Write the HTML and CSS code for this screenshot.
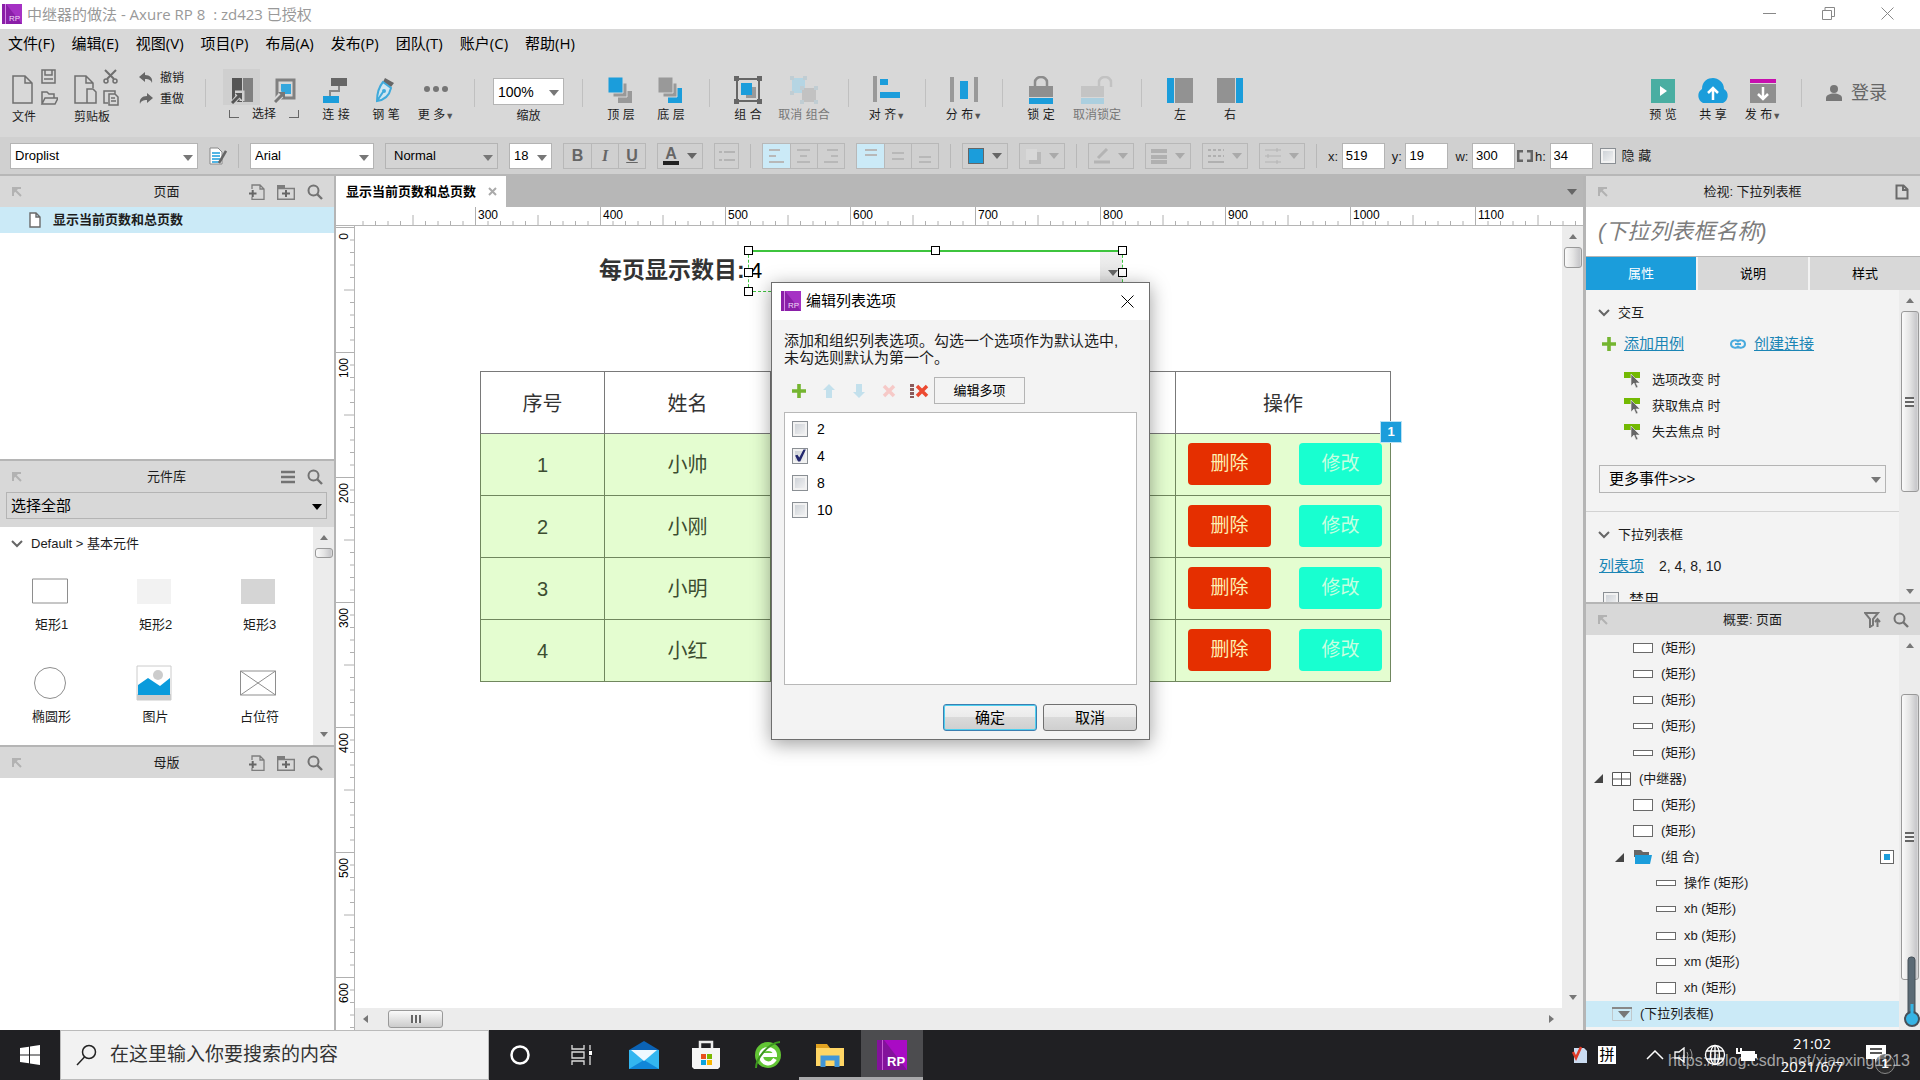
FILE: index.html
```html
<!DOCTYPE html>
<html lang="zh-CN">
<head>
    <meta charset="UTF-8">
    <meta name="viewport" content="width=device-width, initial-scale=1.0">
    <title>中继器的做法 - Axure RP 8</title>
    <link rel="stylesheet" href="styles.css">
</head>
<body>
    <!-- shared icons -->
    <svg class="defs" aria-hidden="true">
        <symbol id="rp" viewBox="0 0 20 20">
            <path fill="#8a1fa8" d="M0 0h20v20H0z"/><path fill="#a531c4" d="M4 0h16v20z"/><path fill="#d58be6" d="M3 0h1v20H3z"/>
            <text x="7" y="17" font-size="8" font-family="Liberation Sans" fill="#f3dcf8">RP</text>
        </symbol>
        <symbol id="pin" viewBox="0 0 10 10"><path d="M1 9V1h8M2 2l7 7" fill="none" stroke="#b2b2b2" stroke-width="2"/><path d="M1 1h6L1 7z" fill="#b2b2b2"/></symbol>
        <symbol id="search" viewBox="0 0 16 16"><circle cx="6.5" cy="6.5" r="5" fill="none" stroke="#737373" stroke-width="2"/><path d="M10 10l5 5" stroke="#737373" stroke-width="2.4"/></symbol>
        <symbol id="addpage" viewBox="0 0 16 16"><path d="M3 5V1h8l4 4v10.500H3V13M11 1v4h4" fill="none" stroke="#7d7d7d" stroke-width="1.300"/><path d="M0 9.500h7.500M3.700 6v7" stroke="#666" stroke-width="2"/></symbol>
        <symbol id="addfolder" viewBox="0 0 18 16"><path d="M.7 4.500h16.600v10.800H.7z" fill="none" stroke="#7d7d7d" stroke-width="1.400"/><path d="M0 1h8v3H0z" fill="#7d7d7d"/><path d="M5 9.500h8M9 6v7" stroke="#666" stroke-width="2"/></symbol>
        <symbol id="page" viewBox="0 0 12 16"><path d="M1 1h6l4 4v10H1zM7 1v4h4" fill="#fff" stroke="#6a6a6a" stroke-width="1.400"/></symbol>
        <symbol id="chevron" viewBox="0 0 12 8"><path d="M1 1l5 5 5-5" fill="none" stroke="#666" stroke-width="2"/></symbol>
        <symbol id="plus" viewBox="0 0 14 14"><path d="M7 0v14M0 7h14" stroke="#74b530" stroke-width="3.600"/></symbol>
        <symbol id="event" viewBox="0 0 16 16"><path d="M0 0h16v6H0z" fill="#73b902"/><path d="M7 2v12l3-3 2 5 2-1-2-4h4z" fill="#666" stroke="#f3f3f3" stroke-width=".6"/></symbol>
        <symbol id="tri" viewBox="0 0 10 9"><path d="M9 0v9H0z" fill="#444"/></symbol>
    </svg>

    <header class="titlebar">
        <svg class="i20"><use href="#rp"/></svg>
        <h1>中继器的做法 - Axure RP 8&nbsp; : zd423 已授权</h1>
        <div class="window-buttons">
            <button aria-label="最小化"><svg width="13" height="13"><path d="M0 6.500h13"/></svg></button>
            <button aria-label="还原"><svg width="13" height="13"><path d="M.5 3.500h9v9h-9zM3 3V.5h9.500v9H10"/></svg></button>
            <button aria-label="关闭"><svg width="13" height="13"><path d="M.5.5l12 12M12.500.5l-12 12"/></svg></button>
        </div>
    </header>

    <nav class="menubar">
        <a href="#">文件(F)</a><a href="#">编辑(E)</a><a href="#">视图(V)</a><a href="#">项目(P)</a><a href="#">布局(A)</a><a href="#">发布(P)</a><a href="#">团队(T)</a><a href="#">账户(C)</a><a href="#">帮助(H)</a>
    </nav>

    <div class="toolbar">
        <div class="file-group">
            <svg width="46" height="37" viewBox="0 0 46 37" fill="none" stroke="#6f6f6f" stroke-width="1.500">
                <path d="M1 7h12l7 7v20H1zM13 7v7h7"/><path d="M30 1h13v13H30zM33 1v5h7V1M32 10h9"/><path d="M30 35V23h5l2 2h5v4M30 35l3-6h13l-3 6z"/>
            </svg>
            <span>文件</span>
        </div>
        <div class="file-group">
            <svg width="46" height="37" viewBox="0 0 46 37" fill="none" stroke="#6f6f6f" stroke-width="1.500">
                <path d="M13 34H1V7h11l7 7v5M12 7v7h7M13 20h6l3 3v11h-9z"/><path d="M31 1l9 9M42 1l-9 9" stroke-width="2"/><circle cx="32" cy="12" r="2"/><circle cx="41" cy="12" r="2"/><path d="M34 34h-4V22h11v3M35 25h6l3 3v8h-9zM37 29h4M37 32h5"/>
            </svg>
            <span>剪贴板</span>
        </div>
        <div class="history">
            <button><svg width="14" height="12"><path d="M0 5l6-5v3c5 0 8 3 7 8-1-3-3-4-7-4v3z" fill="#666"/></svg>撤销</button>
            <button><svg width="14" height="12"><path d="M14 5L8 0v3C3 3 0 6 1 11c1-3 3-4 7-4v3z" fill="#666"/></svg>重做</button>
        </div>
        <i class="sep"></i>
        <div class="select-group">
            <div class="select-row">
                <button class="pressed" aria-label="相交选中"><svg width="22" height="28"><path fill="#555" d="M1 2h10v24H1z"/><path fill="#808080" d="M12 2h10v24H12z"/><path d="M1 28L9 18M4 17h7v8" fill="none" stroke="#d0d0d0" stroke-width="5"/><path d="M1 27l8-8" stroke="#555" stroke-width="3"/><path d="M4 17h7v7z" fill="#555"/></svg></button>
                <button aria-label="包含选中"><svg width="22" height="28"><path d="M3 4h17v18H3z" fill="none" stroke="#808080" stroke-width="3"/><path fill="#35a7dd" d="M7 8h10v10H7z"/><path d="M0 27L9 17" stroke="#d8d8d8" stroke-width="6"/><path d="M1 26l7-7" stroke="#777" stroke-width="3"/><path d="M4 16h7v7z" fill="#777"/></svg></button>
            </div>
            <div class="select-label"><i class="corner"></i><span>选择</span><i class="corner end"></i></div>
        </div>
        <button class="tool"><svg width="26" height="28"><path fill="#666" d="M8 2h16v8H8z"/><path fill="#1b9ddb" d="M0 20h16v7H0z"/><path d="M16 10v5H7v5" fill="none" stroke="#888" stroke-width="2"/></svg>连 接</button>
        <button class="tool"><svg width="20" height="28"><path d="M9 2l9 5-3 4-8-5z" fill="#666"/><path d="M7 6C2 12 1 18 1 25c7-1 12-4 14-13zM1 25l6-9" fill="#cfe6f1" stroke="#3faadb" stroke-width="2"/><circle cx="8" cy="15" r="2" fill="#3faadb"/></svg>钢 笔</button>
        <button class="tool"><svg width="28" height="28" fill="#757575"><circle cx="5" cy="13" r="3"/><circle cx="14" cy="13" r="3"/><circle cx="23" cy="13" r="3"/></svg><span>更 多<small>▼</small></span></button>
        <i class="sep"></i>
        <div class="zoom">
            <span class="drop"><select id="zoom" aria-label="缩放"><option>100%</option></select></span>
            <label for="zoom">缩放</label>
        </div>
        <i class="sep"></i>
        <button class="tool"><svg width="28" height="28"><path fill="#999" d="M11 15h14v12H11z"/><path fill="#999" stroke="#d8d8d8" d="M6 7h14v14H6z"/><path fill="#1b9ddb" stroke="#d8d8d8" d="M1 1h15v16H1z"/></svg>顶 层</button>
        <button class="tool"><svg width="28" height="28"><path fill="#1b9ddb" d="M11 12h14v15H11z"/><path fill="#999" stroke="#d8d8d8" d="M6 7h14v14H6z"/><path fill="#999" stroke="#d8d8d8" d="M1 1h15v16H1z"/></svg>底 层</button>
        <i class="sep"></i>
        <button class="tool"><svg width="28" height="28"><path d="M3 3h22v22H3z" fill="none" stroke="#666" stroke-width="2"/><path d="M0 0h5v5H0zM23 0h5v5h-5zM0 23h5v5H0zM23 23h5v5h-5z" fill="#666"/><path d="M12 11h10v11H12z" fill="#999"/><path d="M7 7h11v12H7z" fill="#1b9ddb"/></svg>组 合</button>
        <button class="tool wide off"><svg width="28" height="28"><path d="M2 2h13v15H2z" fill="#b5d5e3"/><path d="M12 12h14v14H12z" fill="#c2c2c2"/><path d="M0 0h4v4H0zM13 0h4v4h-4zM0 15h4v4H0zM10 10h4v4h-4zM24 10h4v4h-4zM10 24h4v4h-4zM24 24h4v4h-4z" fill="#c0cdd3"/></svg>取消 组合</button>
        <i class="sep"></i>
        <button class="tool"><svg width="28" height="28"><path fill="#999" d="M0 0h4v26H0z"/><path fill="#1b9ddb" d="M7 3h8v6H7zM7 16h20v6H7z"/></svg><span>对 齐<small>▼</small></span></button>
        <i class="sep"></i>
        <button class="tool"><svg width="28" height="28"><path fill="#999" d="M0 1h4v25H0zM24 1h4v25h-4z"/><path fill="#1b9ddb" d="M10 5h8v18h-8z"/></svg><span>分 布<small>▼</small></span></button>
        <i class="sep"></i>
        <button class="tool"><svg width="24" height="28"><path d="M6 10V6a6 5 0 0 1 12 0v4" fill="none" stroke="#8c8c8c" stroke-width="2.500"/><path fill="#8f8f8f" d="M0 10h24v11H0z"/><path fill="#1b9ddb" d="M0 22h24v6H0z"/></svg>锁 定</button>
        <button class="tool wide off"><svg width="32" height="28"><path d="M18 10V6a6 5 0 0 1 12 0v5" fill="none" stroke="#c2c2c2" stroke-width="2.500"/><path fill="#c4c4c4" d="M0 10h23v11H0z"/><path fill="#abcfdf" d="M0 22h23v6H0z"/></svg>取消锁定</button>
        <i class="sep"></i>
        <button class="tool"><svg width="28" height="28"><path fill="#1b9ddb" d="M1 2h7v25H1z"/><path fill="#929292" d="M9 2h18v25H9z"/></svg>左</button>
        <button class="tool"><svg width="28" height="28"><path fill="#929292" d="M1 2h18v25H1z"/><path fill="#1b9ddb" d="M20 2h7v25h-7z"/></svg>右</button>
        <div class="right-tools">
            <button class="tool"><svg width="26" height="28"><path fill="#4aaea2" d="M1 3h24v24H1z"/><path fill="#fff" d="M10 10l7 5-7 5z"/></svg>预 览</button>
            <button class="tool"><svg width="34" height="28"><path fill="#1b9ddb" d="M7 27a8 8 0 0 1-1-14C6 5 12 2 17 2s11 4 11 11a8 8 0 0 1-1 14z"/><path d="M17 24V13M12 17l5-5 5 5" fill="none" stroke="#fff" stroke-width="2.500"/></svg>共 享</button>
            <button class="tool"><svg width="26" height="28"><path fill="#c70fae" d="M0 3h26v4H0z"/><path fill="#8f8f8f" d="M0 8h26v19H0z"/><path d="M13 11v12M8 18l5 5 5-5" fill="none" stroke="#fff" stroke-width="2.500"/></svg><span>发 布<small>▼</small></span></button>
            <i class="sep"></i>
            <button class="login"><svg width="16" height="16" fill="#777"><circle cx="8" cy="4" r="4"/><path d="M0 16v-3c0-6 16-6 16 0v3z"/></svg>登录</button>
        </div>
    </div>

    <div class="formatbar">
        <span class="drop w188"><select aria-label="样式"><option>Droplist</option></select></span>
        <button class="plain" aria-label="管理样式"><svg width="18" height="18"><path d="M1 1h8l4 4v12H1z" fill="#fff" stroke="#888"/><path d="M3 6h8M3 9h8M3 12h8M3 15h7" stroke="#1b9ddb" stroke-width="1.500"/><path d="M17 4l-7 12" stroke="#666" stroke-width="2.500"/></svg></button>
        <i class="bar"></i>
        <span class="drop w124"><select aria-label="字体"><option>Arial</option></select></span>
        <span class="drop w112 gray"><select aria-label="字重"><option>Normal</option></select></span>
        <span class="drop w43"><select aria-label="字号"><option>18</option></select></span>
        <div class="btn-group"><button class="bold">B</button><button class="ital">I</button><button class="under">U</button></div>
        <button class="box"><span class="font-color">A</span><i class="arrow"></i></button>
        <button class="box narrow off" aria-label="项目符号"><svg width="16" height="14"><path d="M5 3h11M5 11h11M0 3h3M0 11h3" stroke="#b4b4b4" stroke-width="2"/></svg></button>
        <i class="bar"></i>
        <div class="btn-group">
            <button class="on" aria-label="左对齐"><svg width="16" height="16"><path d="M0 2h11M0 8h7M0 14h15"/></svg></button>
            <button aria-label="居中"><svg width="16" height="16"><path d="M1 2h13M4 8h7M1 14h13"/></svg></button>
            <button aria-label="右对齐"><svg width="16" height="16"><path d="M4 2h11M8 8h7M1 14h14"/></svg></button>
        </div>
        <div class="btn-group">
            <button class="on" aria-label="顶部"><svg width="16" height="16"><path d="M2 2h12M2 7h12"/></svg></button>
            <button aria-label="中部"><svg width="16" height="16"><path d="M2 5h12M2 11h12"/></svg></button>
            <button aria-label="底部"><svg width="16" height="16"><path d="M2 9h12M2 14h12"/></svg></button>
        </div>
        <i class="bar"></i>
        <button class="box" aria-label="填充"><i class="swatch"></i><i class="arrow"></i></button>
        <button class="box off" aria-label="阴影"><svg width="16" height="16"><path fill="#b9b9b9" d="M4 4h12v12H4z"/><path fill="#d8d8d8" d="M1 1h11v11H1z"/></svg><i class="arrow"></i></button>
        <i class="bar"></i>
        <button class="box off" aria-label="线条颜色"><svg width="16" height="16"><path d="M4 10l9-9M0 14h16" stroke="#b4b4b4" stroke-width="3"/></svg><i class="arrow"></i></button>
        <button class="box off" aria-label="线宽"><svg width="16" height="16"><path d="M0 3h16M0 9h16M0 14h16" stroke="#b0b0b0" stroke-width="4"/></svg><i class="arrow"></i></button>
        <button class="box off" aria-label="线型"><svg width="16" height="16"><path d="M0 2h16M0 8h16" stroke="#b0b0b0" stroke-width="2" stroke-dasharray="3 2"/><path d="M0 14h16" stroke="#b0b0b0" stroke-width="2"/></svg><i class="arrow"></i></button>
        <button class="box off" aria-label="箭头"><svg width="16" height="16"><path d="M0 2h16M0 8h16M0 14h16M12 0v4M3 6v4M12 12v4" stroke="#b4b4b4"/></svg><i class="arrow"></i></button>
        <i class="bar"></i>
        <label>x: <input class="num" type="text" value="519"></label>
        <label>y: <input class="num" type="text" value="19"></label>
        <label>w: <input class="num" type="text" value="300"></label>
        <svg class="link" width="16" height="12"><path d="M6 1H1v10h5M10 1h5v10h-5" fill="none" stroke="#666" stroke-width="3"/></svg>
        <label>h: <input class="num" type="text" value="34"></label>
        <label class="hide"><input type="checkbox"> 隐 藏</label>
    </div>

    <main class="workspace">
        <aside class="left">
            <section class="pages">
                <header class="panel-head"><svg class="i10"><use href="#pin"/></svg><h2>页面</h2>
                    <div class="head-icons"><svg class="i16"><use href="#addpage"/></svg><svg class="i18"><use href="#addfolder"/></svg><svg class="i16"><use href="#search"/></svg></div>
                </header>
                <a href="#" class="page-row"><svg class="page-ico"><use href="#page"/></svg>显示当前页数和总页数</a>
            </section>
            <section class="library">
                <header class="panel-head"><svg class="i10"><use href="#pin"/></svg><h2>元件库</h2>
                    <div class="head-icons"><svg width="14" height="14"><path d="M0 2h14M0 7h14M0 12h14" stroke="#737373" stroke-width="2.500"/></svg><svg class="i16"><use href="#search"/></svg></div>
                </header>
                <div class="lib-select"><span class="drop black"><select aria-label="元件库选择"><option>选择全部</option></select></span></div>
                <div class="with-scroll">
                    <div class="lib-body">
                        <h3><svg class="chev"><use href="#chevron"/></svg>Default &gt; 基本元件</h3>
                        <div class="widgets">
                            <figure><svg width="36" height="36"><path d="M.5 6h35v24H.5z" fill="#fff" stroke="#8e8e8e"/></svg><figcaption>矩形1</figcaption></figure>
                            <figure><svg width="36" height="36"><path d="M1 6h34v25H1z" fill="#f2f2f2"/></svg><figcaption>矩形2</figcaption></figure>
                            <figure><svg width="36" height="36"><path d="M1 6h34v25H1z" fill="#d5d5d5"/></svg><figcaption>矩形3</figcaption></figure>
                            <figure><svg width="36" height="36"><circle cx="18" cy="18" r="15.500" fill="#fff" stroke="#8e8e8e"/></svg><figcaption>椭圆形</figcaption></figure>
                            <figure><svg width="36" height="36"><path d="M1 1h34v34H1z" fill="#fff" stroke="#ccc"/><circle cx="22" cy="10" r="5" fill="#ccc"/><path fill="#ccc" d="M1 29h34v6H1z"/><path fill="#0a9bdc" d="M2 20l10-7 12 8 10-8v17H2z"/></svg><figcaption>图片</figcaption></figure>
                            <figure><svg width="36" height="36"><path d="M.5 6h35v24H.5zl35 24M35.500 6l-35 24" fill="none" stroke="#8e8e8e"/></svg><figcaption>占位符</figcaption></figure>
                        </div>
                    </div>
                    <div class="scroll"><i class="up"></i><i class="thumb tiny"></i><i class="down"></i></div>
                </div>
            </section>
            <section class="masters">
                <header class="panel-head"><svg class="i10"><use href="#pin"/></svg><h2>母版</h2>
                    <div class="head-icons"><svg class="i16"><use href="#addpage"/></svg><svg class="i18"><use href="#addfolder"/></svg><svg class="i16"><use href="#search"/></svg></div>
                </header>
            </section>
        </aside>

        <section class="center">
            <div class="tabs"><a href="#" class="tab">显示当前页数和总页数<svg width="9" height="9"><path d="M1 1l7 7M8 1l-7 7" stroke="#aaa" stroke-width="2"/></svg></a><i class="arrow"></i></div>
            <svg class="ruler-x" height="19">
                <defs><pattern id="tx" x="14" width="125" height="19" patternUnits="userSpaceOnUse"><path d="M.5 0v19M63 8v11M13 14v5M25.500 14v5M38 14v5M50.500 14v5M75.500 14v5M88 14v5M100.500 14v5M113 14v5" stroke="#b0b0b0"/></pattern></defs>
                <rect x="20" width="100%" height="19" fill="url(#tx)"/>
                <text x="142" y="12">300</text><text x="267" y="12">400</text><text x="392" y="12">500</text><text x="517" y="12">600</text><text x="642" y="12">700</text><text x="767" y="12">800</text><text x="892" y="12">900</text><text x="1017" y="12">1000</text><text x="1142" y="12">1100</text>
            </svg>
            <div class="stage">
                <svg class="ruler-y" width="19">
                    <defs><pattern id="ty" y="1" width="19" height="125" patternUnits="userSpaceOnUse"><path d="M0 .5h19M8 63h11M14 13h5M14 25.500h5M14 38h5M14 50.500h5M14 75.500h5M14 88h5M14 100.500h5M14 113h5" stroke="#b0b0b0"/></pattern></defs>
                    <rect width="19" height="100%" fill="url(#ty)"/>
                    <text transform="translate(12 7) rotate(-90)">0</text><text transform="translate(12 132) rotate(-90)">100</text><text transform="translate(12 257) rotate(-90)">200</text><text transform="translate(12 382) rotate(-90)">300</text><text transform="translate(12 507) rotate(-90)">400</text><text transform="translate(12 632) rotate(-90)">500</text><text transform="translate(12 757) rotate(-90)">600</text>
                </svg>
                <div class="canvas-wrap">
                    <div class="canvas-row">
                        <div class="canvas">
                            <label class="per-page" for="size">每页显示数目:</label>
                            <div class="widget-droplist">
                                <select id="size"><option>4</option></select><i class="arrow"></i>
                                <i class="h nw"></i><i class="h n"></i><i class="h ne"></i><i class="h w"></i><i class="h e"></i><i class="h sw"></i>
                            </div>
                            <table class="grid">
                                <colgroup><col class="c1"><col class="c2"><col><col class="c4"></colgroup>
                                <thead><tr><th>序号</th><th>姓名</th><th></th><th>操作</th></tr></thead>
                                <tbody>
                                    <tr><td>1</td><td>小帅</td><td></td><td><div class="ops"><button class="del">删除</button><button class="edit">修改</button></div></td></tr>
                                    <tr><td>2</td><td>小刚</td><td></td><td><div class="ops"><button class="del">删除</button><button class="edit">修改</button></div></td></tr>
                                    <tr><td>3</td><td>小明</td><td></td><td><div class="ops"><button class="del">删除</button><button class="edit">修改</button></div></td></tr>
                                    <tr><td>4</td><td>小红</td><td></td><td><div class="ops"><button class="del">删除</button><button class="edit">修改</button></div></td></tr>
                                </tbody>
                            </table>
                            <span class="note-badge">1</span>

                            <div class="dialog" role="dialog" aria-labelledby="dlg-title">
                                <header><svg class="i20"><use href="#rp"/></svg><h2 id="dlg-title">编辑列表选项</h2><button aria-label="关闭"><svg width="13" height="13"><path d="M.5.5l12 12M12.500.5l-12 12" stroke="#000"/></svg></button></header>
                                <div class="dialog-body">
                                    <p>添加和组织列表选项。勾选一个选项作为默认选中,<br>未勾选则默认为第一个。</p>
                                    <div class="dialog-tools">
                                        <button aria-label="添加"><svg class="i14"><use href="#plus"/></svg></button>
                                        <button aria-label="上移"><svg width="12" height="14"><path fill="#c3e0ec" d="M6 0l6 6H9v8H3V6H0z"/></svg></button>
                                        <button aria-label="下移"><svg width="12" height="14"><path fill="#c3e0ec" d="M6 14l6-6H9V0H3v8H0z"/></svg></button>
                                        <button aria-label="删除"><svg width="14" height="14"><path d="M2 2l10 10M12 2L2 12" stroke="#f6c9c7" stroke-width="3.500"/></svg></button>
                                        <button aria-label="全部删除"><svg width="20" height="14"><path d="M3 0v14" stroke="#8b5a5a" stroke-width="4" stroke-dasharray="3 1"/><path d="M8 2l10 10M18 2L8 12" stroke="#ec4a31" stroke-width="3.500"/></svg></button>
                                        <button class="many">编辑多项</button>
                                    </div>
                                    <div class="options">
                                        <label><input type="checkbox">2</label>
                                        <label><input type="checkbox" checked>4</label>
                                        <label><input type="checkbox">8</label>
                                        <label><input type="checkbox">10</label>
                                    </div>
                                    <footer><button class="primary">确定</button><button>取消</button></footer>
                                </div>
                            </div>
                        </div>
                        <div class="scroll"><i class="up"></i><i class="thumb small"></i><i class="down"></i></div>
                    </div>
                    <div class="scroll-x"><i class="lt"></i><i class="thumb-x"></i><i class="rt"></i></div>
                </div>
            </div>
        </section>

        <aside class="right">
            <section class="inspector">
                <header class="panel-head"><svg class="i10"><use href="#pin"/></svg><h2>检视: 下拉列表框</h2><div class="head-icons"><svg width="14" height="16"><path d="M1.500 1.500h7l4 4v9h-11zM8 2v4h5" fill="none" stroke="#6a6a6a" stroke-width="2"/></svg></div></header>
                <input class="name" type="text" aria-label="名称" placeholder="(下拉列表框名称)">
                <div class="prop-tabs"><button class="active">属性</button><button>说明</button><button>样式</button></div>
                <div class="with-scroll props">
                    <div class="prop-body">
                        <h3><svg class="chev"><use href="#chevron"/></svg>交互</h3>
                        <div class="case-links"><svg class="i14"><use href="#plus"/></svg><a href="#">添加用例</a><svg class="chain" width="16" height="10"><path d="M9 3C7 0 1 1 1 5s6 5 8 2M7 3c2-3 8-2 8 2s-6 5-8 2M5 5h6" fill="none" stroke="#48aadd" stroke-width="2"/></svg><a href="#">创建连接</a></div>
                        <ul class="events">
                            <li><svg class="i16"><use href="#event"/></svg>选项改变 时</li>
                            <li><svg class="i16"><use href="#event"/></svg>获取焦点 时</li>
                            <li><svg class="i16"><use href="#event"/></svg>失去焦点 时</li>
                        </ul>
                        <span class="drop more"><select aria-label="更多事件"><option>更多事件&gt;&gt;&gt;</option></select></span>
                        <hr>
                        <h3><svg class="chev"><use href="#chevron"/></svg>下拉列表框</h3>
                        <p class="items"><a href="#">列表项</a>2, 4, 8, 10</p>
                        <label class="disable"><input type="checkbox">禁用</label>
                    </div>
                    <div class="scroll"><i class="up"></i><i class="thumb long"><b></b></i><i class="down"></i></div>
                </div>
            </section>
            <section class="outline">
                <header class="panel-head"><svg class="i10"><use href="#pin"/></svg><h2>概要: 页面</h2><div class="head-icons"><svg width="17" height="16"><path d="M1 1h13l-5 6v6l-3 2V7zM13.500 15V8M11 10l2.500-3 2.500 3" fill="none" stroke="#777" stroke-width="2"/></svg><svg class="i16"><use href="#search"/></svg></div></header>
                <div class="with-scroll">
                    <ul class="tree">
                        <li class="l2"><i class="r h10"></i>(矩形)</li>
                        <li class="l2"><i class="r h8"></i>(矩形)</li>
                        <li class="l2"><i class="r h8"></i>(矩形)</li>
                        <li class="l2"><i class="r h6"></i>(矩形)</li>
                        <li class="l2"><i class="r h6"></i>(矩形)</li>
                        <li class="l1"><svg class="tri"><use href="#tri"/></svg><svg width="19" height="14"><path d="M.5.5h18v13H.5zM9.500 0v14M0 7h19" fill="#fff" stroke="#555"/></svg>(中继器)</li>
                        <li class="l2"><i class="r h12"></i>(矩形)</li>
                        <li class="l2"><i class="r h12"></i>(矩形)</li>
                        <li class="l2"><svg class="tri"><use href="#tri"/></svg><svg width="20" height="14"><path fill="#666" d="M1 0h7l2 2h6v5H1z"/><path fill="#1b9ddb" d="M2 5h17l-2 9H2z"/></svg>(组 合)<i class="target"></i></li>
                        <li class="l3"><i class="r h6"></i>操作 (矩形)</li>
                        <li class="l3"><i class="r h6"></i>xh (矩形)</li>
                        <li class="l3"><i class="r h8"></i>xb (矩形)</li>
                        <li class="l3"><i class="r h8"></i>xm (矩形)</li>
                        <li class="l3"><i class="r h12"></i>xh (矩形)</li>
                        <li class="l1 current"><svg width="20" height="14"><path d="M.5 1h19v12.500H.5z" fill="none" stroke="#c0c8cc"/><path d="M0 1h20" stroke="#888" stroke-width="2"/><path d="M6 4h12l-6 7z" fill="#777"/></svg>(下拉列表框)</li>
                    </ul>
                    <div class="scroll"><i class="up"></i><i class="thumb tall"><b></b></i></div>
                </div>
                <svg class="thermo" width="16" height="72"><rect x="4" y="1" width="7" height="62" rx="3" fill="#5b6a75" stroke="#465059"/><circle cx="8" cy="63" r="7" fill="#36b4e5" stroke="#465059" stroke-width="2"/><path d="M8 48v14" stroke="#36b4e5" stroke-width="3"/></svg>
            </section>
        </aside>
    </main>

    <footer class="taskbar">
        <button class="start" aria-label="开始"><svg width="20" height="20" fill="#fff"><path d="M0 3l9-1.300V9.500H0zM10 1.500L20 0v9.500H10zM0 10.500h9v7.800L0 17zM10 10.500h10V20l-10-1.500z"/></svg></button>
        <label class="search"><svg width="22" height="22"><circle cx="13" cy="8" r="6.500" fill="none" stroke="#222" stroke-width="1.500"/><path d="M8.500 13L1 21" stroke="#222" stroke-width="1.500"/></svg><input type="text" aria-label="搜索" placeholder="在这里输入你要搜索的内容"></label>
        <button class="app" aria-label="Cortana"><svg width="22" height="22"><circle cx="11" cy="11" r="8.500" fill="none" stroke="#fff" stroke-width="2.500"/></svg></button>
        <button class="app" aria-label="任务视图"><svg width="22" height="22"><path d="M1 1v4h12V1M1 21v-4h12v4M1 8h12v6H1zM19 1v5M19 12v9" fill="none" stroke="#ddd" stroke-width="1.300"/><path fill="#fff" d="M18 7h3v4h-3z"/></svg></button>
        <button class="app" aria-label="邮件"><svg width="32" height="30"><path fill="#0b63b5" d="M1 10L16 1l15 9v4H1z"/><path fill="#33b6f0" d="M1 10h30v19H1z"/><path fill="#1086d8" d="M1 29l15-9 15 9z"/><path fill="#eef8ff" d="M3 10h26L16 21z"/></svg></button>
        <button class="app" aria-label="应用商店"><svg width="30" height="30"><path d="M9 9V2h12v7" fill="none" stroke="#ececec" stroke-width="2.500"/><path fill="#f5f5f5" d="M1 8h28v19l-2 2H3l-2-2z"/><path fill="#e94f1d" d="M10 14h5v5h-5z"/><path fill="#7ab800" d="M16 14h5v5h-5z"/><path fill="#0ba4e0" d="M10 20h5v5h-5z"/><path fill="#f9b600" d="M16 20h5v5h-5z"/></svg></button>
        <button class="app" aria-label="浏览器"><svg width="28" height="30"><circle cx="14" cy="15" r="13" fill="#62c534"/><path d="M21 19c-5 8-14 4-14-4S21 7 21 15H8" fill="none" stroke="#fff" stroke-width="4"/><path d="M2 28C2 19 14 3 26 2" fill="none" stroke="#3d981f" stroke-width="2"/></svg></button>
        <button class="app open" aria-label="文件资源管理器"><svg width="28" height="26"><path fill="#e2a321" d="M0 2h11l3 4h-14z"/><path fill="#ffd665" d="M0 6h28v18H0z"/><path d="M7 25v-9h14v9" fill="none" stroke="#4196d8" stroke-width="5"/></svg></button>
        <button class="app open current-app" aria-label="Axure RP"><svg width="30" height="30"><path fill="#83129b" d="M0 0h30v30H0z"/><path fill="#a90bc4" d="M7 0h23v30z"/><path fill="#c55ed3" d="M5 0h1v30H5z"/><text x="10" y="26" font-size="13" font-weight="bold" font-family="Liberation Sans" fill="#fff">RP</text></svg></button>
        <div class="tray">
            <svg width="16" height="18"><path fill="#cbdcf1" d="M2 2h10l3 3v12H2z"/><path d="M1 6l3 6L9 1" fill="none" stroke="#df3b28" stroke-width="2.500"/></svg>
            <span class="ime">拼</span>
            <svg class="caret" width="18" height="10"><path d="M1 9l8-8 8 8" fill="none" stroke="#fff" stroke-width="1.500"/></svg>
            <svg width="20" height="16"><path d="M1 5h4l5-4v14l-5-4H1z" fill="none" stroke="#fff" stroke-width="1.300"/><path d="M13 5q2 3 0 6M16 2q4 6 0 12" fill="none" stroke="#999"/></svg>
            <svg width="22" height="22" fill="none" stroke="#fff" stroke-width="1.400"><circle cx="11" cy="11" r="9.500"/><ellipse cx="11" cy="11" rx="4.500" ry="9.500"/><path d="M2 7h18M2 15h18M11 1v20"/></svg>
            <svg width="22" height="14"><path d="M5 3h14v10H5z" fill="#fff"/><path d="M20 6v4M1 0v5h4V0" stroke="#fff" stroke-width="2" fill="none"/></svg>
            <time>21:02<br>2021/6/7</time>
            <div class="notify"><svg width="20" height="20"><path fill="#fff" d="M0 0h20v14h-7l-4 5v-5H0z"/><path d="M4 4h12M4 8h12" stroke="#222" stroke-width="1.500"/></svg><b>1</b></div>
        </div>
        <span class="watermark">https://blog.csdn.net/xiaoxing1213</span>
    </footer>
</body>
</html>
```
FILE: styles.css
```css
* {
    box-sizing: border-box;
}
body {
    margin: 0;
    height: 100vh;
    display: flex;
    flex-direction: column;
    overflow: hidden;
    font-family: "Liberation Sans", "Noto Sans CJK SC", sans-serif;
    font-size: 13px;
    line-height: 18px;
    color: #1c1c1c;
    background: #d8d8d8;
}
button, input, select {
    font: inherit;
    color: inherit;
    margin: 0;
    padding: 0;
    border: 0;
    background: none;
    border-radius: 0;
}
svg {
    display: block;
    flex: none;
}
h1, h2, h3, p, ul, figure {
    margin: 0;
    padding: 0;
    font-weight: normal;
    font-size: 13px;
    list-style: none;
}
a {
    color: inherit;
    text-decoration: none;
}
.defs { position: absolute; width: 0; height: 0; }
.i10 { width: 10px; height: 10px; }
.i14 { width: 14px; height: 14px; }
.i16 { width: 16px; height: 16px; }
.i18 { width: 18px; height: 16px; }
.i20 { width: 20px; height: 20px; }
.chev { width: 12px; height: 8px; }

/* title and menu */
.titlebar {
    flex: none;
    height: 29px;
    background: #fff;
    display: flex;
    align-items: center;
    padding: 0 3px 2px 2px;
    gap: 5px;
}
.titlebar h1 {
    font-family: "Open Sans", "Noto Sans CJK SC", sans-serif;
    font-size: 15px;
    color: #999;
    flex: 1;
}
.window-buttons {
    display: flex;
}
.window-buttons button {
    width: 59px;
    display: flex;
    justify-content: center;
    fill: none;
    stroke: #888;
}
.menubar {
    flex: none;
    height: 30px;
    display: flex;
    align-items: center;
    gap: 17px;
    padding: 0 0 3px 8px;
    font-family: "Open Sans", "Noto Sans CJK SC", sans-serif;
    font-size: 15px;
    color: #000;
}

/* main toolbar */
.toolbar {
    flex: none;
    height: 78px;
    display: flex;
    align-items: flex-start;
    padding: 10px 0 0 12px;
    font-size: 12px;
}
.sep {
    width: 1px;
    height: 28px;
    margin: 10px 13px 0;
    background: #c0c0c0;
}
.file-group {
    width: 62px;
}
.file-group span {
    display: block;
    padding-top: 2px;
}
.history {
    padding-left: 3px;
    width: 56px;
    display: flex;
    flex-direction: column;
    gap: 3px;
}
.history button {
    display: flex;
    align-items: center;
    gap: 7px;
    white-space: nowrap;
}
.select-group {
    width: 92px;
    padding: 0 4px;
}
.select-row {
    display: flex;
    gap: 6px;
}
.select-row button {
    width: 37px;
    height: 36px;
    padding: 6px 8px 0;
}
.select-row .pressed {
    background: #cfcfcf;
}
.select-label {
    display: flex;
    justify-content: space-between;
    align-items: center;
    padding: 0 8px 0 6px;
}
.corner {
    width: 10px;
    height: 8px;
    border: solid #666;
    border-width: 0 0 1px 1px;
}
.corner.end {
    border-width: 0 1px 1px 0;
}
.tool {
    width: 50px;
    display: flex;
    flex-direction: column;
    align-items: center;
    white-space: nowrap;
    padding-top: 7px;
    gap: 2px;
}
.tool.wide {
    width: 62px;
}
.tool.off {
    color: #777;
}
.tool small {
    font-size: 9px;
    color: #555;
}
.zoom {
    display: flex;
    flex-direction: column;
    align-items: center;
    padding: 9px 5px 0;
    gap: 2px;
}
.zoom .drop {
    width: 71px;
    height: 27px;
    font-size: 14px;
}
.right-tools {
    margin-left: auto;
    display: flex;
    align-items: flex-start;
    padding-right: 33px;
}
.login {
    display: flex;
    align-items: center;
    gap: 9px;
    font-size: 18px;
    color: #666;
    padding: 15px 0 0 11px;
}

/* drop-downs */
.drop {
    position: relative;
    display: block;
    height: 26px;
    border: 1px solid #b4b4b4;
    background: #fff;
    color: #000;
}
.drop select {
    appearance: none;
    width: 100%;
    height: 100%;
    padding: 0 20px 0 4px;
}
.drop::after {
    content: "";
    position: absolute;
    right: 4px;
    top: 11px;
    border: 5px solid transparent;
    border-top: 6px solid #777;
    border-bottom: 0;
    pointer-events: none;
}
.drop.gray {
    background: #d4d4d4;
}
.drop.black::after {
    border-top-color: #000;
}
.w188 { width: 188px; }
.w124 { width: 124px; }
.w112 { width: 113px; }
.w43 { width: 43px; }
.w112 select { padding-left: 8px; }
.arrow {
    border: 5px solid transparent;
    border-top: 6px solid #666;
    border-bottom: 0;
}

/* format bar */
.formatbar {
    flex: none;
    height: 39px;
    display: flex;
    align-items: center;
    gap: 11px;
    padding-left: 10px;
    background: #d0d0d0;
    border-bottom: 2px solid #b7b7b7;
    white-space: nowrap;
}
.bar {
    width: 1px;
    height: 24px;
    background: #b8b8b8;
}
.btn-group {
    display: flex;
    border: 1px solid #b8b8b8;
    height: 26px;
}
.btn-group button {
    width: 27px;
    display: flex;
    align-items: center;
    justify-content: center;
    font-size: 16px;
    color: #666;
    stroke: #b8b8b8;
    stroke-width: 2;
}
.btn-group button + button {
    border-left: 1px solid #b8b8b8;
}
.btn-group .on {
    background: #cbeaf7;
}
.bold { font-weight: bold; }
.ital { font-family: "Liberation Serif", serif; font-style: italic; font-weight: bold; }
.under { text-decoration: underline; font-weight: bold; }
.box {
    width: 46px;
    height: 26px;
    border: 1px solid #b8b8b8;
    display: flex;
    align-items: center;
    justify-content: center;
    gap: 8px;
}
.box.narrow {
    width: 25px;
}
.box.off .arrow {
    border-top-color: #aaa;
}
.font-color {
    width: 16px;
    line-height: 15px;
    border-bottom: 4px solid #222;
    font-size: 16px;
    font-weight: bold;
    color: #666;
}
.swatch {
    width: 16px;
    height: 16px;
    background: #1b9ddb;
    border: 1px solid #666;
}
.num {
    width: 43px;
    height: 26px;
    border: 1px solid #b4b4b4;
    background: #fff;
    padding: 0 3px;
    color: #000;
}
.formatbar label + label {
    margin-left: -4px;
}
.formatbar .link {
    margin: 0 -9px;
}
.formatbar .hide {
    display: flex;
    align-items: center;
    gap: 6px;
}
input[type="checkbox"] {
    appearance: none;
    flex: none;
    width: 16px;
    height: 16px;
    border: 1px solid #8a8f94;
    background: linear-gradient(135deg, #c8cdd3, #f6f6f6);
    box-shadow: inset 0 0 0 2px #f2f2f2;
}
input[type="checkbox"]:checked::before {
    content: "";
    display: block;
    width: 14px;
    height: 14px;
    background: #24286e;
    clip-path: polygon(15% 50%, 32% 45%, 45% 65%, 75% 8%, 92% 8%, 52% 92%, 36% 92%);
}

/* workspace */
.workspace {
    flex: 1;
    min-height: 0;
    display: flex;
}
.left {
    width: 336px;
    border-right: 2px solid #b5b5b5;
    display: flex;
    flex-direction: column;
    background: #fff;
}
.panel-head {
    flex: none;
    height: 31px;
    display: grid;
    grid-template-columns: 80px 1fr 82px;
    align-items: center;
    background: #d8d8d8;
    padding: 0 11px 0 12px;
}
.panel-head h2 {
    text-align: center;
}
.head-icons {
    display: flex;
    justify-content: flex-end;
    align-items: center;
    gap: 12px;
}
.pages {
    height: 285px;
    border-bottom: 2px solid #b5b5b5;
}
.page-row {
    display: flex;
    align-items: center;
    height: 26px;
    padding-left: 29px;
    gap: 12px;
    background: #cbeaf7;
    font-weight: bold;
}
.page-ico {
    width: 12px;
    height: 16px;
}
.library {
    height: 286px;
    border-bottom: 2px solid #b5b5b5;
    display: flex;
    flex-direction: column;
}
.lib-select {
    background: #d8d8d8;
    padding: 0 7px 8px 6px;
    font-size: 15px;
}
.lib-select .drop {
    height: 27px;
    background: none;
}
.with-scroll {
    flex: 1;
    min-height: 0;
    display: flex;
}
.lib-body {
    flex: 1;
    padding: 8px 0 0 11px;
}
.lib-body h3 {
    display: flex;
    align-items: center;
    gap: 8px;
}
.widgets {
    display: grid;
    grid-template-columns: repeat(3, 104px);
    row-gap: 31px;
    padding-top: 20px;
    margin-left: -13px;
}
.widgets figure {
    display: flex;
    flex-direction: column;
    align-items: center;
    gap: 7px;
}
.widgets figcaption {
    padding-left: 3px;
}
.scroll {
    flex: none;
    width: 21px;
    background: #ececec;
    display: flex;
    flex-direction: column;
    align-items: center;
    padding: 8px 1px;
}
.up, .down {
    border: 4px solid transparent;
    border-bottom: 5px solid #777;
    border-top: 0;
}
.down {
    margin-top: auto;
    border-top: 5px solid #777;
    border-bottom: 0;
}
.thumb {
    width: 18px;
    margin-top: 8px;
    border: 1px solid #999;
    border-radius: 3px;
    background: linear-gradient(90deg, #fafafa, #e4e4e4 50%, #c8c8cb 90%, #ddd);
    display: flex;
    align-items: center;
    justify-content: center;
}
.thumb b {
    width: 9px;
    height: 10px;
    background: repeating-linear-gradient(#666 0 2px, #f2f2f2 2px 4px);
}
.tiny { height: 10px; }
.small { height: 21px; }
.long { height: 181px; }
.tall { height: 286px; margin-top: 46px; }

/* canvas */
.center {
    flex: 1;
    min-width: 0;
    display: flex;
    flex-direction: column;
    background: #fff;
}
.tabs {
    flex: none;
    height: 31px;
    background: #b7b7b7;
    display: flex;
    align-items: center;
    justify-content: space-between;
    padding-right: 6px;
}
.tab {
    height: 31px;
    display: flex;
    align-items: center;
    gap: 12px;
    padding: 0 9px 0 10px;
    background: #fff;
    font-weight: bold;
    color: #000;
}
.ruler-x {
    width: 100%;
    border-bottom: 1px solid #b5b5b5;
    font-size: 12px;
}
.stage {
    flex: 1;
    min-height: 0;
    display: flex;
}
.ruler-y {
    height: 100%;
    border-right: 1px solid #b5b5b5;
    font-size: 12px;
}
.ruler-y text {
    text-anchor: end;
}
.canvas-wrap {
    flex: 1;
    min-width: 0;
    display: flex;
    flex-direction: column;
}
.canvas-row {
    flex: 1;
    min-height: 0;
    display: flex;
}
.canvas {
    flex: 1;
    position: relative;
}
.scroll-x {
    height: 22px;
    background: #ececec;
    display: flex;
    align-items: center;
    padding: 0 29px 0 8px;
}
.lt, .rt {
    border: 4px solid transparent;
    border-right: 5px solid #777;
    border-left: 0;
}
.rt {
    margin-left: auto;
    border-left: 5px solid #777;
    border-right: 0;
}
.thumb-x {
    width: 55px;
    height: 18px;
    margin-left: 20px;
    border: 1px solid #999;
    border-radius: 3px;
    background: repeating-linear-gradient(90deg, #666 0 2px, #eee 2px 4px) center / 10px 8px no-repeat, linear-gradient(#fafafa, #ccc);
}
.per-page {
    position: absolute;
    left: 244px;
    top: 30px;
    font-size: 23px;
    line-height: 28px;
    font-weight: bold;
    color: #333;
}
.widget-droplist {
    position: absolute;
    left: 393px;
    top: 24px;
    width: 375px;
    height: 42px;
    border: 1px dashed #3ec43e;
    border-top: 2px solid #3ec43e;
}
.widget-droplist select {
    appearance: none;
    width: 100%;
    height: 100%;
    padding: 0 0 2px 1px;
    font-size: 22px;
    color: #000;
    background: linear-gradient(#f0f0f0, #ddd) right / 22px 100% no-repeat;
}
.widget-droplist .arrow {
    position: absolute;
    right: 4px;
    top: 18px;
}
.h {
    position: absolute;
    width: 9px;
    height: 9px;
    border: 1px solid #000;
    background: #fff;
    left: -5px;
    top: -5px;
}
.h.n, .h.ne, .h.nw { top: -6px; }
.h.n { left: 182px; }
.h.ne, .h.e { left: 369px; }
.h.w, .h.e { top: 16px; }
.h.sw { top: 35px; }
.grid {
    position: absolute;
    left: 125px;
    top: 145px;
    width: 911px;
    table-layout: fixed;
    border-collapse: collapse;
    font-size: 20px;
    line-height: 28px;
    text-align: center;
    color: #333;
}
.c1 { width: 124px; }
.c2 { width: 166px; }
.c4 { width: 215px; }
.grid th, .grid td {
    height: 62px;
    padding: 0;
    font-weight: normal;
    border: 1px solid #797979;
}
.grid th {
    padding-top: 2px;
}
.grid td {
    background: #e4fdd0;
    border-color: #70875e;
    color: #3c4d30;
}
.ops {
    display: flex;
    justify-content: space-between;
    padding: 0 8px 2px 12px;
}
.ops button {
    width: 83px;
    height: 42px;
    border-radius: 4px;
    font-size: 19px;
}
.del { background: #e52f00; color: #fdf0b4; }
.edit { background: #18ffd0; color: #c6ffe0; }
.note-badge {
    position: absolute;
    left: 1025px;
    top: 195px;
    width: 22px;
    height: 22px;
    background: #1b9ddb;
    border: 1px solid #b9e2f5;
    color: #fff;
    font-weight: bold;
    text-align: center;
    line-height: 20px;
}

/* list options dialog */
.dialog {
    position: absolute;
    left: 416px;
    top: 56px;
    width: 379px;
    border: 1px solid #6e6e6e;
    background: #f3f3f3;
    box-shadow: 0 4px 18px rgba(0, 0, 0, .38);
}
.dialog header {
    height: 37px;
    background: #fff;
    display: flex;
    align-items: center;
    gap: 5px;
    padding: 0 15px 1px 9px;
    color: #000;
}
.dialog header h2 {
    flex: 1;
    font-size: 15px;
}
.dialog-body {
    padding: 12px 12px 8px;
}
.dialog-body p {
    font-size: 15px;
    line-height: 17px;
    white-space: nowrap;
}
.dialog-tools {
    display: flex;
    align-items: center;
    height: 27px;
    margin: 11px 0 8px;
}
.dialog-tools button {
    width: 30px;
    display: flex;
    justify-content: center;
}
.dialog-tools .many {
    width: 91px;
    height: 27px;
    align-items: center;
    border: 1px solid #b4b4b4;
    color: #000;
}
.options {
    height: 273px;
    padding: 2px 7px;
    border: 1px solid #b8b8b8;
    background: #fff;
    font-size: 14px;
}
.options label {
    display: flex;
    align-items: center;
    gap: 9px;
    height: 27px;
    color: #000;
}
.dialog footer {
    display: flex;
    justify-content: flex-end;
    gap: 6px;
    padding-top: 19px;
}
.dialog footer button {
    width: 94px;
    height: 27px;
    border: 1px solid #707070;
    border-radius: 3px;
    background: linear-gradient(#f3f3f3, #ebebeb 49%, #dadada 50%, #cfcfcf);
    font-size: 15px;
    color: #000;
}
.dialog footer .primary {
    border-color: #3c7fb1;
    box-shadow: inset 0 0 0 1px #4fd0ef;
}

/* right side */
.right {
    width: 337px;
    border-left: 3px solid #b5b5b5;
    display: flex;
    flex-direction: column;
    background: #f3f3f3;
}
.inspector {
    height: 428px;
    border-bottom: 2px solid #b5b5b5;
    display: flex;
    flex-direction: column;
}
.name {
    flex: none;
    height: 50px;
    padding-left: 12px;
    background: #fff;
    border-bottom: 1px solid #b5b5b5;
    font-size: 22px;
    font-style: italic;
}
.name::placeholder {
    color: #7d7d7d;
}
.prop-tabs {
    flex: none;
    height: 33px;
    display: flex;
    gap: 2px;
    background: #f3f3f3;
}
.prop-tabs button {
    flex: 1;
    background: #d8d8d8;
    color: #000;
}
.prop-tabs .active {
    background: #1b9ddb;
    color: #fff;
}
.props {
    overflow: hidden;
}
.prop-body {
    flex: 1;
}
.prop-body h3 {
    display: flex;
    align-items: center;
    gap: 8px;
    padding: 14px 0 0 12px;
}
.prop-body a {
    color: #1a85b5;
    text-decoration: underline;
    font-size: 15px;
}
.case-links {
    display: flex;
    align-items: center;
    gap: 8px;
    padding: 13px 0 0 16px;
}
.chain {
    margin-left: 38px;
}
.events {
    padding: 14px 0 0 38px;
}
.events li {
    display: flex;
    align-items: center;
    gap: 12px;
    height: 26px;
}
.more {
    margin: 20px 13px 0;
    height: 28px;
    background: none;
    font-size: 15px;
}
.more select {
    padding-left: 9px;
}
.prop-body hr {
    margin: 18px 0 0;
    border: 0;
    border-top: 1px solid #d2d2d2;
}
.items {
    padding: 13px 0 0 13px;
    font-size: 14px;
}
.items a {
    margin-right: 15px;
}
.disable {
    display: flex;
    align-items: center;
    gap: 10px;
    padding: 16px 0 0 17px;
    font-size: 15px;
}
.outline {
    flex: 1;
    min-height: 0;
    position: relative;
    display: flex;
    flex-direction: column;
}
.tree {
    flex: 1;
    display: flex;
    flex-direction: column;
    padding-bottom: 3px;
}
.tree li {
    flex: 1;
    display: flex;
    align-items: center;
    gap: 8px;
}
.tree .l1 { padding-left: 26px; }
.tree .l2 { padding-left: 47px; }
.tree .l3 { padding-left: 70px; }
.tri {
    width: 10px;
    height: 9px;
    margin-left: -18px;
}
.current {
    background: #cbeaf7;
}
.r {
    width: 20px;
    border: 1px solid #6a6a6a;
    background: #fff;
}
.h6 { height: 6px; }
.h8 { height: 8px; }
.h10 { height: 10px; }
.h12 { height: 12px; }
.target {
    width: 14px;
    height: 14px;
    margin: 0 5px 0 auto;
    border: 1px solid #666;
    background: #1b9ddb;
    box-shadow: inset 0 0 0 3px #fff;
}
.thermo {
    position: absolute;
    right: 0;
    bottom: 2px;
}

/* taskbar */
.taskbar {
    flex: none;
    position: relative;
    height: 50px;
    display: flex;
    background: #202023;
    color: #fff;
}
.start {
    width: 60px;
    display: flex;
    align-items: center;
    justify-content: center;
}
.search {
    width: 429px;
    display: flex;
    align-items: center;
    gap: 12px;
    padding-left: 15px;
    background: #f2f2f2;
    border: 1px solid #bbb;
}
.search input {
    flex: 1;
    font-size: 19px;
    line-height: 28px;
}
.search input::placeholder {
    color: #333;
}
.app {
    width: 62px;
    display: flex;
    align-items: center;
    justify-content: center;
    border-bottom: 3px solid transparent;
    padding-top: 3px;
}
.app.open {
    border-bottom-color: #a9a9ab;
}
.current-app {
    background: #4c4c4f;
}
.tray {
    margin-left: auto;
    display: flex;
    align-items: center;
    gap: 10px;
    padding-right: 20px;
}
.ime {
    width: 18px;
    height: 18px;
    background: #fff;
    color: #000;
    font-size: 15px;
    text-align: center;
}
.caret {
    margin-left: 20px;
}
.tray time {
    width: 88px;
    text-align: center;
    font-family: "Open Sans", sans-serif;
    font-size: 15px;
    line-height: 23px;
}
.notify {
    position: relative;
    width: 34px;
}
.notify b {
    position: absolute;
    left: 9px;
    top: 9px;
    width: 20px;
    height: 20px;
    border: 1px solid #888;
    border-radius: 50%;
    background: rgba(50, 50, 50, .7);
    text-align: center;
}
.watermark {
    position: absolute;
    right: 10px;
    top: 22px;
    font-size: 16px;
    color: rgba(255, 255, 255, .6);
}
```
